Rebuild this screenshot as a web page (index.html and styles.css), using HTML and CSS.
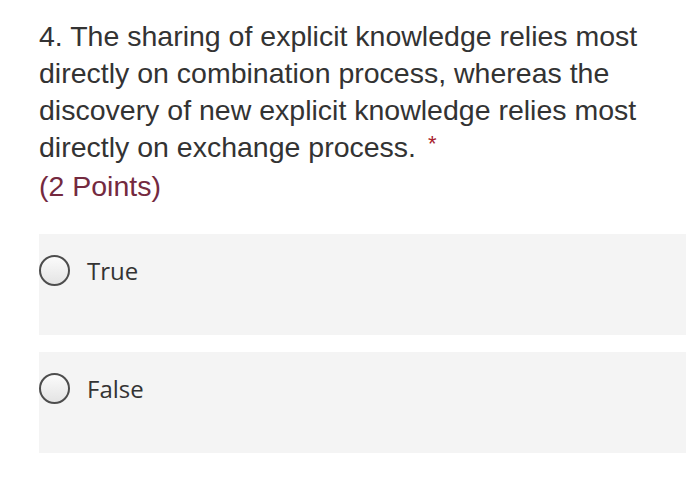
FILE: index.html
```html
<!DOCTYPE html>
<html>
<head>
<meta charset="utf-8">
<link rel="stylesheet" href="styles.css">
</head>
<body>
<div class="question">
  <div class="title">4. The sharing of explicit knowledge relies most directly on combination process, whereas the discovery of new explicit knowledge relies most directly on exchange process. <span class="req">*</span></div>
  <div class="points">(2 Points)</div>
  <div class="options">
    <label class="option"><span class="radio"></span><span class="label">True</span></label>
    <label class="option"><span class="radio"></span><span class="label">False</span></label>
  </div>
</div>
</body>
</html>
```
FILE: styles.css
```css
html, body {
  margin: 0;
  padding: 0;
  background: #ffffff;
}
.question {
  padding: 18px 14px 0 39px;
  font-family: "Liberation Sans", Arial, sans-serif;
}
.title {
  font-size: 28.5px;
  line-height: 37px;
  color: #333333;
  width: 640px;
}
.req {
  color: #a8222e;
  font-size: 22px;
  position: relative;
  top: -6px;
  margin-left: 4px;
}
.points {
  font-size: 28.5px;
  line-height: 37px;
  color: #742a3f;
}
.options {
  margin-top: 29px;
  display: flex;
  flex-direction: column;
  gap: 17px;
}
.option {
  display: flex;
  align-items: flex-start;
  height: 101px;
  width: 647px;
  background: #f4f4f4;
  box-sizing: border-box;
  padding-top: 20px;
}
.radio {
  width: 31px;
  height: 31px;
  box-sizing: border-box;
  border: 2px solid #4d4d4d;
  border-radius: 50%;
  background: linear-gradient(180deg, #fbfbfb 0%, #e4e4e4 100%);
  margin-top: 1px;
  flex: none;
}
.label {
  font-family: "Open Sans", "Noto Sans", sans-serif;
  font-size: 24px;
  line-height: 33px;
  color: #333333;
  margin-left: 17px;
}
```
